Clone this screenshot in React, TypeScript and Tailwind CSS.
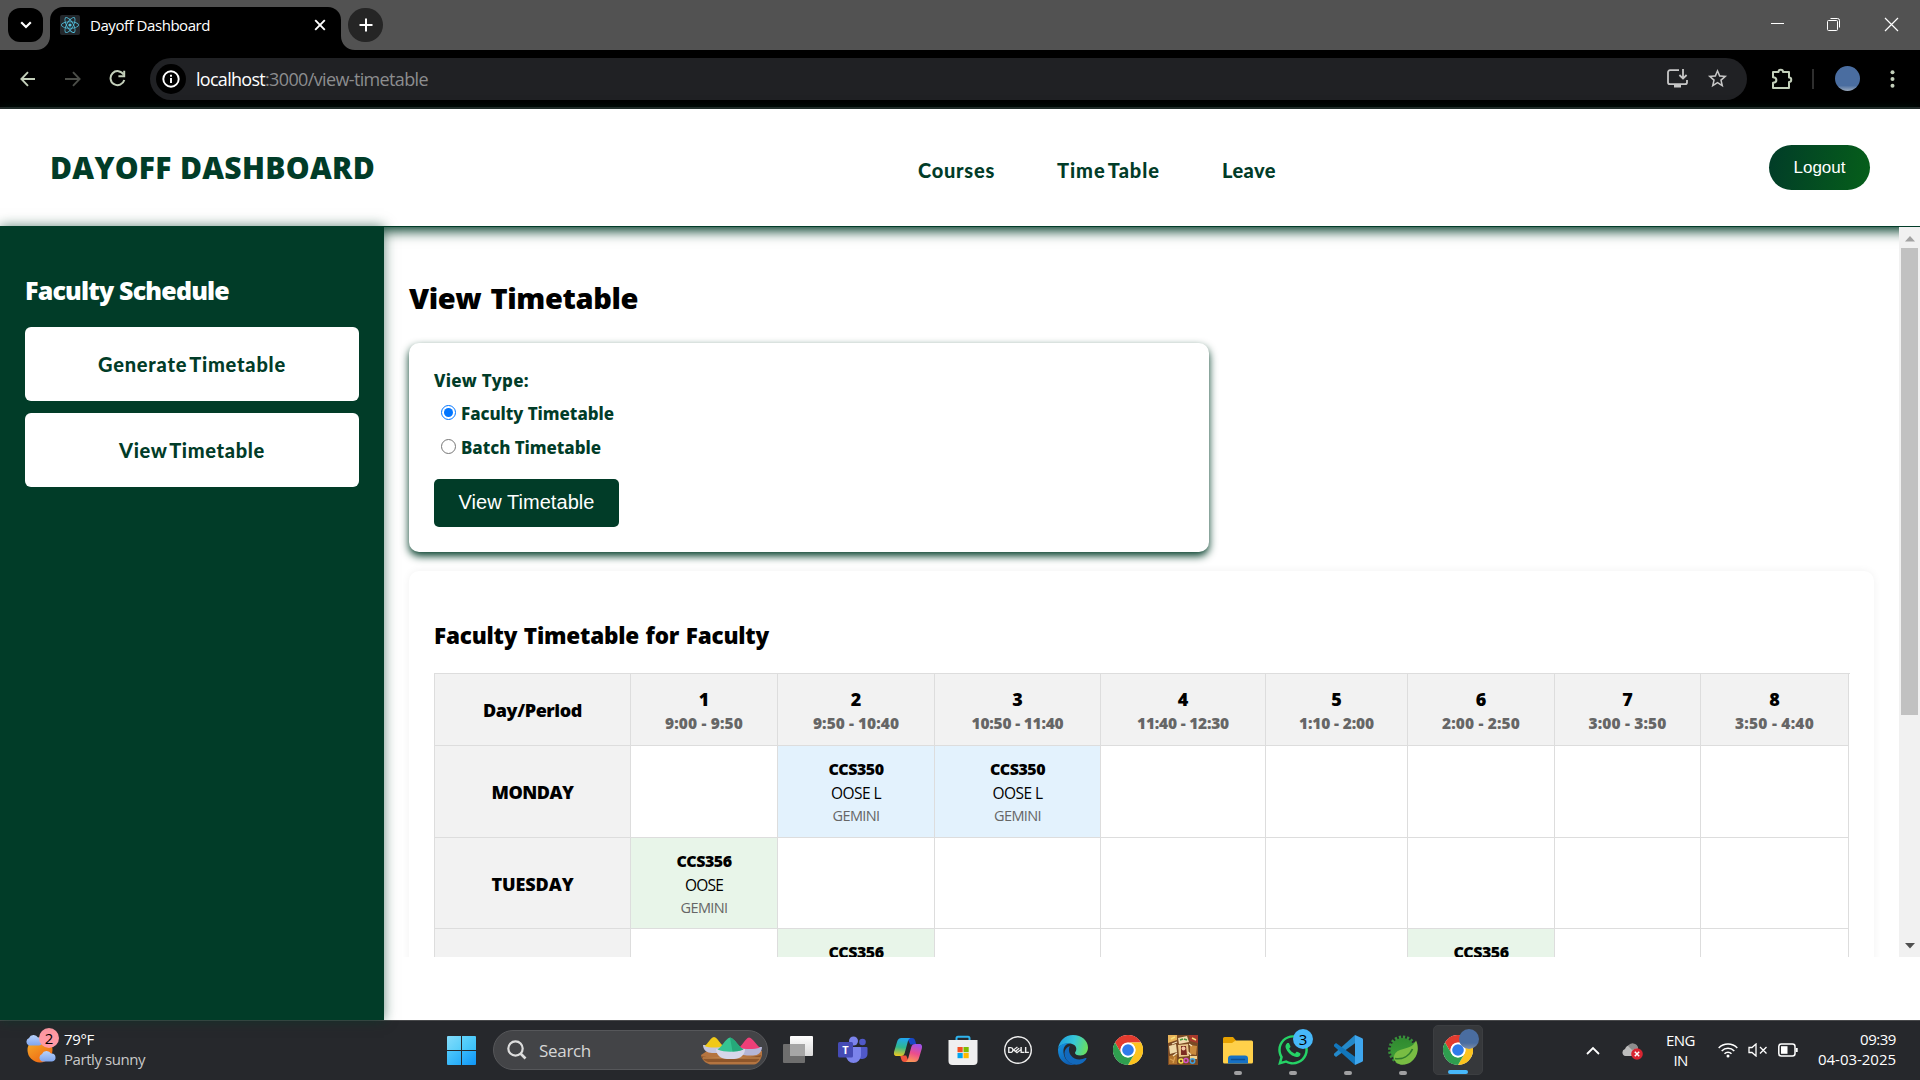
import React, { useLayoutEffect, useRef, useState } from "react";
import { FaReact, FaWhatsapp } from "react-icons/fa";
import { SiDell } from "react-icons/si";
import { MdOutlineStarBorder } from "react-icons/md";

/** Text set to a given width by spreading the difference between its letters. */
function Fit({ w, children, className = "" }: { w: number; children: string; className?: string }) {
  const ref = useRef<HTMLSpanElement>(null);
  const [spacing, setSpacing] = useState(0);
  useLayoutEffect(() => {
    if (ref.current) {
      const natural = ref.current.getBoundingClientRect().width;
      setSpacing((w - natural) / children.length);
    }
  }, []);
  return (
    <span ref={ref} className={"inline-block whitespace-pre " + className} style={{ letterSpacing: spacing + "px" }}>
      {children}
    </span>
  );
}

function TabStrip() {
  return (
    <div className="flex h-[50px] items-start bg-[#525252] text-white">
      <div className="mt-2 ml-2 flex h-[34px] w-[35px] items-center justify-center rounded-[12px] bg-black">
        <svg width="12" height="8" viewBox="0 0 12 8" fill="none" stroke="#fff" strokeWidth="2.2">
          <path d="M1.2 1.3 6 6l4.8-4.7" />
        </svg>
      </div>
      <div className="relative mt-[7px] ml-[7px] flex h-[43px] w-[291px] items-center rounded-t-[13px] bg-black pb-[7px]">
        <svg className="absolute bottom-0 -left-[14px]" width="14" height="14" viewBox="0 0 14 14">
          <path d="M14 0v14H0C8 14 14 8 14 0Z" fill="#000" />
        </svg>
        <svg className="absolute -right-[14px] bottom-0" width="14" height="14" viewBox="0 0 14 14">
          <path d="M0 0v14h14C6 14 0 8 0 0Z" fill="#000" />
        </svg>
        <div className="ml-[10px] flex size-5 items-center justify-center rounded-[2px] bg-[#23272b]">
          <FaReact size={18} color="#53c1de" />
        </div>
        <Fit w={120} className="ml-[10px] text-[15px] leading-5">
          Dayoff Dashboard
        </Fit>
        <svg className="ml-auto mr-[15px]" width="12" height="12" viewBox="0 0 12 12" stroke="#fff" strokeWidth="1.9">
          <path d="M1.2 1.2l9.6 9.6M10.8 1.2l-9.6 9.6" />
        </svg>
      </div>
      <div className="mt-2 ml-[7px] flex h-[34px] w-[35px] items-center justify-center rounded-full bg-[#252525]">
        <svg width="14" height="14" viewBox="0 0 14 14" stroke="#fff" strokeWidth="2">
          <path d="M7 .5v13M.5 7h13" />
        </svg>
      </div>
      <div className="mt-[17px] mr-[21px] ml-auto flex items-center gap-[43px]">
        <svg width="14" height="15" viewBox="0 0 14 15" stroke="#fff">
          <path d="M1 6.5h13" />
        </svg>
        <svg width="14" height="15" viewBox="0 0 14 15" fill="none" stroke="#fff">
          <path d="M3.5 1.5h7a2 2 0 0 1 2 2v7" />
          <rect x=".5" y="3.5" width="10" height="10" rx="1" />
        </svg>
        <svg width="15" height="15" viewBox="0 0 15 15" stroke="#fff" strokeWidth="1.2">
          <path d="M1 1l13 13M14 1L1 14" />
        </svg>
      </div>
    </div>
  );
}

function Toolbar() {
  return (
    <div className="flex h-[59px] items-center border-b-2 border-[#29282a] bg-black">
      <svg className="ml-5" width="16" height="16" viewBox="0 0 16 16" fill="none" stroke="#c3cfba" strokeWidth="1.9">
        <path d="M15 8H1.5M8 1.2 1.4 8 8 14.8" />
      </svg>
      <svg className="ml-[29px]" width="16" height="16" viewBox="0 0 16 16" fill="none" stroke="#4b4d48" strokeWidth="1.9">
        <path d="M0 8h14M8 1.2 14.6 8 8 14.8" />
      </svg>
      <svg className="ml-[28px]" width="17" height="17" viewBox="0 0 17 17" fill="none" stroke="#c3cfba" strokeWidth="2">
        <path d="M14.6 4.6A7 7 0 1 0 15.3 10" />
        <path d="M15.2 .8v5.4H9.4" />
      </svg>
      <div className="ml-6 flex h-[42px] w-[1597px] items-center rounded-full bg-[#202124]">
        <div className="ml-[6px] flex size-[30px] items-center justify-center rounded-full bg-black">
          <svg width="18" height="18" viewBox="0 0 18 18" fill="none" stroke="#fff" strokeWidth="1.9">
            <circle cx="9" cy="9" r="7.7" />
            <path d="M9 8v5M9 4.8v1.9" />
          </svg>
        </div>
        <div className="ml-[10px] text-[18px] leading-6">
          <Fit w={69} className="text-white">
            localhost
          </Fit>
          <Fit w={163} className="text-[#8c8d8f]">
            :3000/view-timetable
          </Fit>
        </div>
        <svg className="ml-auto" width="21" height="19" viewBox="0 0 21 19" fill="none" stroke="#c7c7c7" strokeWidth="1.8">
          <path d="M12 1.2H3a2 2 0 0 0-2 2v10a2 2 0 0 0 2 2h15a2 2 0 0 0 2-2V11" />
          <path d="M16 0v9M12.4 6l3.6 3.6L19.6 6" />
          <path d="M7 17h7" strokeWidth="3" />
        </svg>
        <MdOutlineStarBorder className="mr-[18px] ml-[18px]" size={23} color="#c7c7c7" />
      </div>
      <svg className="ml-6" width="22" height="22" viewBox="0 0 22 22" fill="none" stroke="#c3cfba" strokeWidth="2" strokeLinejoin="round">
        <path d="M2 4h5.500c0-3 4.500-3 4.500 0H18v5.500c3 0 3 4.500 0 4.500v6H2v-5.200c4.500 0 4.500-5.600 0-5.600Z" />
      </svg>
      <div className="ml-[19px] h-5 w-[2px] bg-[#2e2e2e]" />
      <div className="ml-[21px] size-[25px] rounded-full bg-[linear-gradient(180deg,#4a6da0_0%,#4a6da0_78%,#9aa9bd_100%)]" />
      <svg className="ml-[30px]" width="5" height="18" viewBox="0 0 5 18" fill="#c3cfba">
        <circle cx="2.500" cy="2.300" r="2" />
        <circle cx="2.500" cy="9" r="2" />
        <circle cx="2.500" cy="15.700" r="2" />
      </svg>
    </div>
  );
}

function SiteHeader() {
  return (
    <header className="flex h-[118px] shrink-0 items-center border-b border-[#013c28] bg-white text-[#013c28] shadow-[0_4px_12px_#013c28]">
      <h1 className="ml-[50px] w-[868px] pt-[1px] text-[30px] leading-10 font-extrabold">
        <Fit w={325}>DAYOFF DASHBOARD</Fit>
      </h1>
      <nav className="flex gap-[62px] pt-[5px] font-['Lato',sans-serif] text-[20px] leading-6 font-black [word-spacing:-3px]">
        <Fit w={77}>Courses</Fit>
        <Fit w={103}>Time Table</Fit>
        <Fit w={54}>Leave</Fit>
      </nav>
      <button className="mr-[50px] mb-px ml-auto h-[45px] w-[101px] rounded-full bg-[linear-gradient(100deg,#013c28,#065f1a)] pt-[1px] font-['Liberation_Sans',sans-serif] text-[17px] text-white">
        Logout
      </button>
    </header>
  );
}

function Sidebar() {
  return (
    <aside className="relative z-10 w-[384px] shrink-0 bg-[#013c28] px-[25px] pt-[44px] shadow-[0_0_12px_#013c2899]">
      <h2 className="text-[25px] leading-10 font-extrabold text-white">
        <Fit w={204}>Faculty Schedule</Fit>
      </h2>
      <div className="mt-[17px] flex flex-col gap-3 font-['Lato',sans-serif] text-[20px] font-black text-[#013c28]">
        <button className="h-[74px] rounded-[6px] bg-white">
          <Fit w={188} className="[word-spacing:-3px]">Generate Timetable</Fit>
        </button>
        <button className="h-[74px] rounded-[6px] bg-white">
          <Fit w={146} className="[word-spacing:-3px]">View Timetable</Fit>
        </button>
      </div>
    </aside>
  );
}

function ViewForm() {
  return (
    <section className="mt-[25px] h-[209px] w-[800px] rounded-[10px] bg-white px-[25px] pt-[25px] font-['Noto_Sans',sans-serif] text-[17px] font-extrabold text-[#013c28] shadow-[0_4px_8px_#013c28]">
      <div className="flex h-[26px] items-center">
        <Fit w={95}>View Type:</Fit>
      </div>
      <div className="mt-[7px] ml-[7px] flex h-[26px] items-center gap-[5px]">
        <span className="mb-[3px] flex size-[15px] items-center justify-center rounded-full border-[1.500px] border-[#0075ff] bg-white">
          <span className="size-[9px] rounded-full bg-[#0075ff]" />
        </span>
        <Fit w={153}>Faculty Timetable</Fit>
      </div>
      <div className="mt-[8px] ml-[7px] flex h-[26px] items-center gap-[5px]">
        <span className="mb-[3px] size-[15px] rounded-full border border-[#767676] bg-white" />
        <Fit w={140}>Batch Timetable</Fit>
      </div>
      <button className="mt-[18px] h-[48px] w-[185px] rounded-[5px] bg-[#013c28] pb-[2px] font-['Liberation_Sans',sans-serif] text-[20px] font-normal text-white">
        <Fit w={136}>View Timetable</Fit>
      </button>
    </section>
  );
}

const periods: [string, number][] = [
  ["9:00 - 9:50", 78],
  ["9:50 - 10:40", 86],
  ["10:50 - 11:40", 92],
  ["11:40 - 12:30", 92],
  ["1:10 - 2:00", 75],
  ["2:00 - 2:50", 78],
  ["3:00 - 3:50", 78],
  ["3:50 - 4:40", 79],
];

type Slot = { code: string; name: string; nameWidth: number; lab?: boolean };
const lab: Slot = { code: "CCS350", name: "OOSE L", nameWidth: 50, lab: true };
const theory: Slot = { code: "CCS356", name: "OOSE", nameWidth: 38 };

const days: { name: string; width: number; slots: Record<number, Slot> }[] = [
  { name: "MONDAY", width: 82, slots: { 2: lab, 3: lab } },
  { name: "TUESDAY", width: 82, slots: { 1: theory } },
  { name: "WEDNESDAY", width: 118, slots: { 2: theory, 6: theory } },
];

const columns = "grid grid-cols-[197px_147px_157px_166px_165px_142px_147px_146px_148px]";
const cell = "flex flex-col items-center justify-center border-r border-b border-[#ddd]";

function Timetable() {
  return (
    <div className="mt-[18px] w-[1416px] border-t border-[#ddd]">
      <div className={columns + " h-[72px] text-[18px] font-extrabold text-black"}>
        <div className={cell + " border-l bg-[#f2f2f2] pt-[2px]"}>
          <Fit w={99}>Day/Period</Fit>
        </div>
        {periods.map(([time, width], i) => (
          <div key={time} className={cell + " bg-[#f2f2f2] pt-[3px]"}>
            <span className="leading-6">{i + 1}</span>
            <Fit w={width} className="text-[15.500px] leading-6 text-[#666]">
              {time}
            </Fit>
          </div>
        ))}
      </div>
      {days.map((day) => (
        <div key={day.name} className={columns + " h-[91.500px] text-black"}>
          <div className={cell + " border-l bg-[#f2f2f2] pt-[3px] text-[18px] font-extrabold"}>
            <Fit w={day.width}>{day.name}</Fit>
          </div>
          {periods.map((_, i) => {
            const slot = day.slots[i + 1];
            if (!slot) return <div key={i} className={cell} />;
            return (
              <div key={i} className={cell + " pt-[2px] " + (slot.lab ? "bg-[#e3f2fd]" : "bg-[#e8f5e9]")}>
                <Fit w={55} className="text-[16px] leading-6 font-extrabold">
                  {slot.code}
                </Fit>
                <Fit w={slot.nameWidth} className="text-[15.500px] leading-6">
                  {slot.name}
                </Fit>
                <Fit w={47} className="text-[14.500px] leading-[22px] text-[#666]">
                  GEMINI
                </Fit>
              </div>
            );
          })}
        </div>
      ))}
    </div>
  );
}

function Scrollbar() {
  return (
    <div className="relative flex w-[21px] shrink-0 flex-col items-center bg-[#f1f1f1]">
      <svg className="mt-[9px]" width="10" height="6" viewBox="0 0 10 6" fill="#a3a3a3">
        <path d="M0 5.500 5 0l5 5.500Z" />
      </svg>
      <div className="mt-[6px] h-[467px] w-[17px] bg-[#c1c1c1]" />
      <svg className="mt-auto mb-[8px]" width="10" height="6" viewBox="0 0 10 6" fill="#505050">
        <path d="M0 0 5 5.500 10 0Z" />
      </svg>
    </div>
  );
}

function SunnyIcon() {
  const cloud = "M4 11a4 4 0 0 1 0-7.500A5 5 0 0 1 13 3a4 4 0 0 1 1 8Z";
  return (
    <svg width="32" height="36" viewBox="0 0 32 36">
      <defs>
        <linearGradient id="sun" x1="0" y1="0" x2=".6" y2="1">
          <stop offset="0" stopColor="#f7b52c" />
          <stop offset="1" stopColor="#ee6a14" />
        </linearGradient>
        <linearGradient id="cloud" x1="0" y1="0" x2="0" y2="1">
          <stop offset="0" stopColor="#b9d2fb" />
          <stop offset="1" stopColor="#7fa5ee" />
        </linearGradient>
      </defs>
      <circle cx="15" cy="22" r="12.500" fill="url(#sun)" />
      <path d={cloud} transform="translate(0 6.500)" fill="url(#cloud)" />
      <path d={cloud} transform="translate(13 22.500)" fill="url(#cloud)" />
    </svg>
  );
}

function ChromeIcon() {
  return (
    <svg width="30" height="30" viewBox="0 0 48 48">
      <circle cx="24" cy="24" r="24" fill="#fff" />
      <path d="M24 12h20.800A24 24 0 0 0 3.200 12l10.400 18A12 12 0 0 1 24 12Z" fill="#e33b2e" />
      <path d="M34.400 30 24 48A24 24 0 0 0 44.800 12H24a12 12 0 0 1 10.400 18Z" fill="#fcc31e" />
      <path d="M13.600 30 3.200 12A24 24 0 0 0 24 48l10.400-18a12 12 0 0 1-20.800 0Z" fill="#2f9e4f" />
      <circle cx="24" cy="24" r="11.800" fill="#fff" />
      <circle cx="24" cy="24" r="9.300" fill="#2f7bea" />
    </svg>
  );
}

function TaskViewIcon() {
  return (
    <svg width="30" height="30" viewBox="0 0 30 30">
      <defs>
        <linearGradient id="tv" x1="0" y1="0" x2="0" y2="1">
          <stop offset="0" stopColor="#fff" />
          <stop offset="1" stopColor="#d9d9d9" />
        </linearGradient>
      </defs>
      <rect x="0" y="9" width="22" height="19" rx="1" fill="#6e6e6e" />
      <rect x="7" y="1" width="23" height="20" rx="1" fill="url(#tv)" />
      <path d="M7 9h15v12H7z" fill="#a6a6a6" />
    </svg>
  );
}

function TeamsIcon() {
  return (
    <svg width="30" height="30" viewBox="0 0 30 30">
      <circle cx="24.500" cy="7" r="3.300" fill="#5059c9" />
      <path d="M19 12h9.500a1 1 0 0 1 1 1v6a5 5 0 0 1-5 5c-3 0-5.500-2-5.500-5Z" fill="#5059c9" />
      <circle cx="15.500" cy="6" r="4.500" fill="#7b83eb" />
      <path d="M9 12h13a1 1 0 0 1 1 1v7.500a7.500 7.500 0 0 1-15 0V13a1 1 0 0 1 1-1Z" fill="#7b83eb" />
      <rect x="0" y="7" width="15" height="15.500" rx="1.500" fill="#454bb5" />
      <text x="7.500" y="18.500" textAnchor="middle" fontSize="11" fontWeight="700" fill="#fff">
        T
      </text>
    </svg>
  );
}

function CopilotIcon() {
  return (
    <svg width="30" height="30" viewBox="0 0 30 30">
      <defs>
        <linearGradient id="cpA" x1=".3" y1="0" x2=".2" y2="1">
          <stop offset="0" stopColor="#22a7ee" />
          <stop offset=".5" stopColor="#2fb88e" />
          <stop offset="1" stopColor="#f2c81d" />
        </linearGradient>
        <linearGradient id="cpB" x1=".6" y1="0" x2=".3" y2="1">
          <stop offset="0" stopColor="#a052e8" />
          <stop offset=".5" stopColor="#ec4d8c" />
          <stop offset="1" stopColor="#fb9a55" />
        </linearGradient>
      </defs>
      <path d="M14 3h5c2 0 2.700 1 3.300 3l1 3.500h-6Z" fill="#1747c6" />
      <path d="M16 27h-4.500c-2 0-2.700-1-3.300-3l-1-3.500h6Z" fill="#f0543c" />
      <path d="M8.500 3h9c-1.700.8-2.300 2-2.800 4l-3 11c-.6 2-1.700 3-4 3H4c-3 0-3.500-2-2.700-5L4 7c.8-2.700 2-4 4.500-4Z" fill="url(#cpA)" />
      <path d="M21.500 27h-9c1.700-.8 2.300-2 2.800-4l3-11c.6-2 1.700-3 4-3H26c3 0 3.500 2 2.700 5L26 23c-.8 2.700-2 4-4.500 4Z" fill="url(#cpB)" />
    </svg>
  );
}

function StoreIcon() {
  return (
    <svg width="30" height="30" viewBox="0 0 30 30">
      <path d="M8.500 6V3.200a1.500 1.500 0 0 1 1.500-1.500h10a1.500 1.500 0 0 1 1.500 1.500V6" fill="none" stroke="#2fb4ee" strokeWidth="2" />
      <path d="M.5 5h29v21a4 4 0 0 1-4 4h-21a4 4 0 0 1-4-4Z" fill="#efefef" />
      <path d="M9.500 12h5.200v5.200H9.500z" fill="#f25022" />
      <path d="M15.500 12h5.200v5.200h-5.200z" fill="#7fba00" />
      <path d="M9.500 18h5.200v5.200H9.500z" fill="#00a4ef" />
      <path d="M15.500 18h5.200v5.200h-5.200z" fill="#ffb900" />
    </svg>
  );
}

function EdgeIcon() {
  return (
    <svg width="30" height="30" viewBox="0 0 30 30">
      <defs>
        <linearGradient id="edA" x1="0" y1=".4" x2="1" y2=".6">
          <stop offset="0" stopColor="#1fa0e0" />
          <stop offset=".5" stopColor="#37c8d8" />
          <stop offset="1" stopColor="#6be05a" />
        </linearGradient>
        <linearGradient id="edB" x1="0" y1="0" x2=".6" y2="1">
          <stop offset="0" stopColor="#1593e0" />
          <stop offset="1" stopColor="#0f5cb0" />
        </linearGradient>
      </defs>
      <path d="M0 14C1 6 7 0 15 0c9 0 15 6 15 12.500 0 5-3.500 8-7.500 8-3.800 0-5.500-1.700-5.500-2.600 0-.9 1.300-1.500 1.300-4 0-3-3-5.300-7-5.300C5 8.600 1 11 0 14Z" fill="url(#edA)" />
      <path d="M0 14c1.500-4 6-6.500 11-5.500-4 1-6 4.500-5.500 9C6 24 11 28.500 17 29.800 7 31.500 0 24.500 0 15Z" fill="url(#edB)" />
      <path d="M11.800 11c-5.300 1.800-6.800 7.500-4 12.500 3.500 6 11 8 17 4.200 1.700-1.200 3-2.700 3.600-4 .3-.7-.3-1-.9-.7-5.500 2.700-11.500 1.500-14.500-2.500-2.200-3-2.600-6.500-1.200-9.500Z" fill="#1269bd" />
    </svg>
  );
}

function MosaicIcon() {
  return (
    <svg width="30" height="30" viewBox="0 0 30 30">
      <rect width="30" height="30" fill="#7a4a24" />
      <path d="M0 0h9v5L0 8z" fill="#e8b45a" />
      <path d="M10 3l9-2 2 6-10 2z" fill="#f1dcae" />
      <path d="M21 0h9v8l-8-2z" fill="#a8392c" />
      <path d="M1 11l7-2 1 8-7 2z" fill="#eed9a8" />
      <path d="M10 10l10-1 1 12-10 1z" fill="#e7c58a" />
      <path d="M13 11h5l1 9h-6z" fill="#7c2c22" />
      <circle cx="15.500" cy="13.500" r="2" fill="#f2c6a2" />
      <path d="M22 10l7 1-1 9-6-1z" fill="#c98a3d" />
      <path d="M1 21l8-2v10H1z" fill="#b1742d" />
      <path d="M22 21h7v3h-7z" fill="#f0d18a" />
      <path d="M12 5l3-1M16 4l3 1" stroke="#4a9a3d" strokeWidth="1.500" />
      <path d="M3 4l4-2M24 3l4 2" stroke="#f7e27c" strokeWidth="1.500" />
      <path d="M4 9l5-2M21 9l3 2M9 18l-4 3M20 17l3 3" stroke="#f3e3bb" strokeWidth="1.300" />
      <path d="M2 24l4 2M7 22l-2 6" stroke="#d9a052" strokeWidth="1.300" />
      <circle cx="13" cy="26" r="2" fill="none" stroke="#f2e14c" strokeWidth="1.500" />
      <circle cx="18" cy="25.500" r="2" fill="none" stroke="#d552c8" strokeWidth="1.500" />
      <circle cx="24.500" cy="26" r="2.200" fill="none" stroke="#3ea0e0" strokeWidth="1.500" />
    </svg>
  );
}

function ExplorerIcon() {
  return (
    <svg width="30" height="30" viewBox="0 0 30 30">
      <path d="M0 3.500A1.500 1.500 0 0 1 1.500 2H10l3 3.500L10 9H0z" fill="#e6a100" />
      <path d="M0 8h9l3.500-2.500h16A1.500 1.500 0 0 1 30 7v20a1.500 1.500 0 0 1-1.500 1.500h-27A1.500 1.500 0 0 1 0 27Z" fill="#ffd04a" />
      <path d="M5 28.500V23.500a3 3 0 0 1 3-3h14a3 3 0 0 1 3 3v5Z" fill="#1671c4" />
      <path d="M8.500 24.500h13" stroke="#0c4f92" strokeWidth="1.500" strokeLinecap="round" />
    </svg>
  );
}

function VsCodeIcon() {
  return (
    <svg width="30" height="30" viewBox="0 0 30 30">
      <path d="M22 8.300 22 0 1 18.700v1.600l2 1.700Z" fill="#2489ca" />
      <path d="M22 21.700 22 30 1 11.300V9.700L3 8Z" fill="#1277bd" />
      <path d="M22 0l7.200 3.200a1.500 1.500 0 0 1 .8 1.300v21a1.500 1.500 0 0 1-.8 1.300L22 30Z" fill="#3ea6ee" />
    </svg>
  );
}

function SpringIcon() {
  return (
    <svg width="30" height="30" viewBox="0 0 30 30">
      <defs>
        <linearGradient id="sp" x1="0" y1="0" x2="0" y2="1">
          <stop offset="0" stopColor="#2f8a2f" />
          <stop offset="1" stopColor="#3fa03a" />
        </linearGradient>
      </defs>
      <circle cx="14.500" cy="15" r="12" fill="url(#sp)" />
      <circle cx="14.500" cy="15" r="13" fill="none" stroke="#38903a" strokeWidth="3" strokeDasharray="2.300 1.784" />
      <path d="M28 5.500c3.500 7 2 16-5 21.500-6 4-13 3.500-16-1-2.500-4.500-.5-9 5-11 7-2.200 13-2.500 16-9.500Z" fill="#79bd43" />
      <path d="M7 23.500c7 1 14-2 17.500-9.500" fill="none" stroke="#2f7d2d" strokeWidth="1.700" />
    </svg>
  );
}

function PowderBowls() {
  return (
    <svg width="63" height="29" viewBox="0 0 63 29">
      <path d="M1 19 7 15h55v4c-1 5-4 9-8 9.500H10C5 27 2 24 1 19Z" fill="#b47440" />
      <path d="M1 20c15 3 45 3 60-1-1 4-3 6-5 7H8c-3-1-6-3-7-6Z" fill="#8e562b" />
      <path d="M3 22h57" stroke="#cf9257" strokeWidth="1.200" />
      <path d="M3 9h22c0 5-4 8-8 8h-5c-5 0-9-3-9-8Z" fill="#c3c5df" />
      <path d="M4.500 10C8 8 10 2 14 1c4 1 6 7 9.500 9-5 2-14 2-19 0Z" fill="#f0c918" />
      <path d="M38 11h24c0 5-4 8.500-9 8.500h-6c-5 0-9-3.500-9-8.500Z" fill="#b4b5d6" />
      <path d="M39 11.500C43 9 45 2.500 49 1.500c4.500 1 7 7.500 11 10-6 2-15 2-21 0Z" fill="#ee3f78" />
      <path d="M16 13h29c0 6-5 10-11 10h-7c-6 0-11-4-11-10Z" fill="#d6d7ea" />
      <path d="M17.500 13.500C22 11 25 3 30 1.500 35.500 3 38.500 11 43.500 13.500c-7 3-19 3-26 0Z" fill="#35c491" />
      <path d="M30 1.500C35.500 3 38.500 11 43.500 13.500c-3 1.300-7 2-11 2Z" fill="#26a97a" />
    </svg>
  );
}

function AppSlot({ children, running, badge }: { children: React.ReactNode; running?: boolean; badge?: string }) {
  return (
    <div className="relative flex h-[60px] w-[55px] items-center justify-center">
      {children}
      {running && <span className="absolute bottom-[5px] left-[24px] h-1 w-2 rounded-full bg-[#a0a0a2]" />}
      {badge && (
        <span className="absolute top-[9px] right-[7px] flex size-5 items-center justify-center rounded-full bg-[#47b8fa] text-[15px] text-black">
          {badge}
        </span>
      )}
    </div>
  );
}

function Taskbar() {
  return (
    <footer className="relative flex h-[60px] shrink-0 items-center bg-[#26282c] text-white shadow-[inset_0_1px_0_#48494b]">
      <div className="relative ml-[25px] w-8">
        <div className="-mt-[8px]">
          <SunnyIcon />
        </div>
        <span className="absolute -top-[8px] left-[14px] flex size-5 items-center justify-center rounded-full bg-[#ff99a4] text-[15px] text-black">
          2
        </span>
      </div>
      <div className="mb-[2px] ml-[7px] flex w-[383px] flex-col text-[15px] leading-[20px]">
        <div>
          <Fit w={30}>79°F</Fit>
        </div>
        <div className="text-[#c9c9c9]">
          <Fit w={81}>Partly sunny</Fit>
        </div>
      </div>
      <div className="grid grid-cols-2 gap-px overflow-hidden rounded-[1px]">
        <span className="size-[14px] bg-[linear-gradient(135deg,#83dcfb,#55cdf9)]" />
        <span className="size-[14px] bg-[linear-gradient(135deg,#62d4fb,#38bff9)]" />
        <span className="size-[14px] bg-[linear-gradient(135deg,#4fc8fb,#25aaf8)]" />
        <span className="size-[14px] bg-[linear-gradient(135deg,#38b9fb,#0f95f5)]" />
      </div>
      <div className="ml-[17px] flex h-10 w-[275px] items-center rounded-full border border-[#56575a] bg-[#434447]">
        <svg className="ml-[13px]" width="20" height="20" viewBox="0 0 20 20" fill="none" stroke="#ddd" strokeWidth="2.200">
          <circle cx="8.500" cy="8.500" r="7.200" />
          <path d="M13.500 13.500 18.500 18.500" strokeWidth="2.600" />
        </svg>
        <Fit w={52} className="mt-[2px] ml-[12px] text-[17px] leading-6 text-[#d6d6d6]">
          Search
        </Fit>
        <span className="mr-[4px] ml-auto">
          <PowderBowls />
        </span>
      </div>
      <div className="ml-[2px] flex">
        <AppSlot><TaskViewIcon /></AppSlot>
        <AppSlot><TeamsIcon /></AppSlot>
        <AppSlot><CopilotIcon /></AppSlot>
        <AppSlot><StoreIcon /></AppSlot>
        <AppSlot><SiDell size={28} color="#efefef" /></AppSlot>
        <AppSlot><EdgeIcon /></AppSlot>
        <AppSlot><ChromeIcon /></AppSlot>
        <AppSlot><MosaicIcon /></AppSlot>
        <AppSlot running><ExplorerIcon /></AppSlot>
        <AppSlot running badge="3">
          <FaWhatsapp size={34} color="#25d366" className="shrink-0" />
        </AppSlot>
        <AppSlot running><VsCodeIcon /></AppSlot>
        <AppSlot running><SpringIcon /></AppSlot>
        <div className="relative mt-[5px] ml-[3px] flex size-[50px] items-center justify-center rounded-[5px] border border-[#3c3e41] bg-[#36383b]">
          <ChromeIcon />
          <span className="absolute top-[3px] right-[3px] size-5 rounded-full bg-[linear-gradient(180deg,#4a6da0_70%,#7f8fa8)]" />
          <span className="absolute bottom-0 left-[14px] h-1 w-5 rounded-full bg-[#47b8fa]" />
        </div>
      </div>
      <div className="mr-[24px] ml-auto flex items-center text-[15px] leading-5">
        <svg width="14" height="9" viewBox="0 0 14 9" fill="none" stroke="#fff" strokeWidth="1.800">
          <path d="M1 8l6-6 6 6" />
        </svg>
        <svg className="mt-[2px] ml-[22px]" width="21" height="18" viewBox="0 0 21 18">
          <path d="M3.500 14A3.600 3.600 0 0 1 3 7 6 6 0 0 1 8 3a5.500 5.500 0 0 1 8 3l-4 8Z" fill="#bdbdbd" />
          <path d="M6 4a5.500 5.500 0 0 1 10 1.500L10 8Z" fill="#8d8d8d" />
          <circle cx="15" cy="12" r="5.800" fill="#d92531" />
          <path d="M12.800 9.800l4.400 4.400M17.200 9.800l-4.400 4.400" stroke="#fff" strokeWidth="1.500" />
        </svg>
        <div className="ml-[22px] flex w-[31px] flex-col items-center leading-5">
          <Fit w={29}>ENG</Fit>
          <Fit w={14}>IN</Fit>
        </div>
        <svg className="ml-[22px]" width="20" height="16" viewBox="0 0 20 16" fill="none" stroke="#fff" strokeWidth="1.500">
          <path d="M.7 6A13 13 0 0 1 19.300 6M3.700 9a8.800 8.800 0 0 1 12.600 0M6.500 11.800a4.900 4.900 0 0 1 7 0" />
          <circle cx="10" cy="14" r="1.500" fill="#fff" stroke="none" />
        </svg>
        <svg className="ml-[10px]" width="19" height="14" viewBox="0 0 19 14" fill="none" stroke="#fff" strokeWidth="1.300">
          <path d="M1 4.500h3L8 1v12L4 9.500H1Z" />
          <path d="M12 4l6.500 6.500M18.500 4 12 10.500" />
        </svg>
        <svg className="ml-[11px]" width="20" height="14" viewBox="0 0 20 14" fill="none" stroke="#fff" strokeWidth="1.500">
          <rect x=".8" y="1" width="16.200" height="12" rx="2.500" />
          <rect x="3" y="3.200" width="6.500" height="7.600" fill="#fff" stroke="none" />
          <path d="M18.700 5v4" strokeWidth="2" />
        </svg>
        <div className="mb-[2px] ml-[20px] flex w-[78px] flex-col items-end">
          <Fit w={36}>09:39</Fit>
          <Fit w={78}>04-03-2025</Fit>
        </div>
      </div>
    </footer>
  );
}

export default function App() {
  return (
    <div className="flex h-[1080px] w-[1920px] flex-col overflow-hidden bg-white font-['Open_Sans','Noto_Sans',sans-serif]">
      <TabStrip />
      <Toolbar />
      <SiteHeader />
      <div className="flex h-[793px]">
        <div className="-mt-px flex">
          <Sidebar />
        </div>
        <main className="flex h-[730px] flex-1 overflow-hidden">
          <div className="flex-1 pt-[51px] pl-[25px]">
            <h2 className="text-[29px] leading-10 font-extrabold text-black [word-spacing:2px]">
              <Fit w={229}>View Timetable</Fit>
            </h2>
            <ViewForm />
            <section className="mt-[19px] h-[600px] w-[1465px] rounded-[10px] px-[25px] pt-[46px] shadow-[0_0_8px_#0000000f]">
              <h3 className="text-[22.500px] leading-[38px] font-extrabold text-black [word-spacing:1px]">
                <Fit w={335}>Faculty Timetable for Faculty</Fit>
              </h3>
              <Timetable />
            </section>
          </div>
          <Scrollbar />
        </main>
      </div>
      <Taskbar />
    </div>
  );
}
